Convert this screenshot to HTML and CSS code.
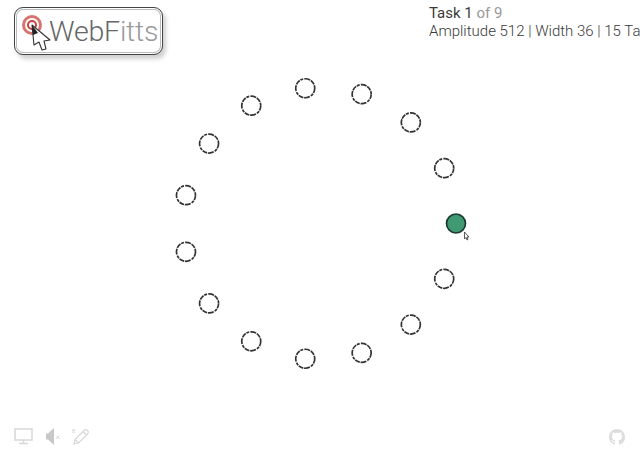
FILE: index.html
```html
<!DOCTYPE html>
<html lang="en">
<head>
  <meta charset="UTF-8">
  <title>WebFitts</title>
  <link rel="stylesheet" href="styles.css">
</head>
<body>
  <div class="page">
    <header class="top">
      <div class="logo">
        <svg class="logo-mark" width="36" height="40" viewBox="0 0 36 40">
          <circle cx="11" cy="11" r="8.500" fill="#fff" stroke="#d9736f" stroke-width="3"/>
          <circle cx="11" cy="11" r="4" fill="#fff" stroke="#c9403c" stroke-width="2"/>
          <path d="M11 11 L13 31 L18 28 L21 36 L25 35 L23 27 L29 26 Z" fill="#fff" stroke="#333" stroke-width="1.100" stroke-linejoin="round"/>
          <path d="M11 11 L12 21 L17 19 Z" fill="#222"/>
        </svg>
        <span class="logo-text">WebF<span class="faded">itts</span></span>
      </div>
      <div class="status">
        <div class="task">Task 1 <span class="faded">of 9</span></div>
        <div class="detail">Amplitude 512 | Width 36 | 15 Ta</div>
      </div>
    </header>

    <svg class="stage" id="stage" width="640" height="450" viewBox="0 0 640 450"></svg>

    <footer class="bottom">
      <div class="tools">
        <svg width="19" height="17" viewBox="0 0 19 17" fill="none" stroke="#d8d8d8" stroke-width="1.500">
          <rect x="1" y="1" width="17" height="11"/>
          <path d="M9.500 12 V15 M5 15.500 H14"/>
        </svg>
        <svg width="15" height="17" viewBox="0 0 15 17">
          <path d="M1 5.500 H3 L9 0 V17 L3 11.500 H1 Z" fill="#c8c8c8"/>
          <path d="M11 7.500 L14.500 11 M14.500 7.500 L11 11" stroke="#d8d8d8" stroke-width="1"/>
        </svg>
        <svg width="19" height="17" viewBox="0 0 19 17" fill="none" stroke="#d8d8d8" stroke-width="1.200">
          <path d="M1 1.500 L4 4.500 M4 1.500 L1 4.500"/>
          <path d="M3 16 L4 11.500 L13.500 2 Q15 1 16.500 2.500 Q18 4 17 5.500 L7.500 15 Z M12 3.500 L15.500 7 M4 11.500 L7.500 15"/>
        </svg>
      </div>
      <svg width="16" height="16" viewBox="0 0 16 16">
        <path fill="#dcdcdc" d="M8 0C3.580 0 0 3.580 0 8c0 3.540 2.290 6.530 5.470 7.590.4.070.55-.17.55-.38 0-.19-.01-.82-.01-1.490-2.010.37-2.530-.49-2.690-.94-.09-.23-.48-.94-.82-1.130-.28-.15-.68-.52-.01-.53.630-.01 1.080.58 1.230.82.720 1.210 1.870.87 2.330.66.070-.52.280-.87.510-1.070-1.780-.2-3.640-.89-3.640-3.950 0-.87.310-1.590.82-2.150-.08-.2-.36-1.020.08-2.120 0 0 .67-.21 2.200.82.640-.18 1.320-.27 2-.27s1.360.09 2 .27c1.530-1.040 2.200-.82 2.200-.82.440 1.100.16 1.920.08 2.120.51.560.82 1.270.82 2.150 0 3.070-1.870 3.750-3.650 3.950.29.250.54.730.54 1.480 0 1.070-.01 1.930-.01 2.200 0 .21.150.46.550.38A8.010 8.010 0 0 0 16 8c0-4.420-3.580-8-8-8z"/>
      </svg>
    </footer>
  </div>

  <script>
    const stage = document.getElementById('stage');
    const ns = 'http://www.w3.org/2000/svg';
    const count = 15;

    for (let i = 0; i < count; i++) {
      const angle = i * 2 * Math.PI / count;
      const c = document.createElementNS(ns, 'circle');
      c.setAttribute('cx', 319.5 + 136.5 * Math.cos(angle));
      c.setAttribute('cy', 223.5 + 136 * Math.sin(angle));
      c.setAttribute('r', 9.500);
      c.setAttribute('class', i === 0 ? 'target active' : 'target');
      stage.appendChild(c);
    }

    // Pointer next to the active target
    const cursor = document.createElementNS(ns, 'path');
    cursor.setAttribute('d', 'M464.500 232 V239 L466 237.500 L467 240 L468 239.500 L467 237 L469 237 Z');
    cursor.setAttribute('class', 'cursor');
    stage.appendChild(cursor);
  </script>
</body>
</html>
```

FILE: styles.css
```css
body {
  margin: 0;
  background-color: #fff;
  font-family: Roboto, "Liberation Sans", sans-serif;
  color: #3a3a3a;
}
.page {
  position: relative;
  width: 640px;
  height: 450px;
  overflow: hidden;
  display: flex;
  flex-direction: column;
  justify-content: space-between;
}
.top {
  display: flex;
  justify-content: space-between;
  align-items: flex-start;
  padding: 4px 0 0 14px;
}
.logo {
  display: flex;
  align-items: center;
  box-sizing: border-box;
  width: 149px;
  height: 48px;
  margin-top: 3px;
  padding-left: 6px;
  border: 1px solid #444;
  border-radius: 9px;
  background-color: #fff;
  box-shadow: inset 0 0 0 1px #fff, inset 0 0 0 2px #bbb, 3px 4px 4px #d0d0d0;
}
.logo-mark {
  flex: none;
  margin: 6px -8px 0 0;
}
.logo-text {
  position: relative;
  font-size: 28.500px;
  font-weight: 300;
  letter-spacing: -0.2px;
  color: #666;
}
.faded {
  color: #999;
}
.status {
  width: 211px;
  flex: none;
  white-space: nowrap;
  font-size: 15px;
  font-weight: 300;
  line-height: 18px;
}
.task {
  font-weight: 400;
}
.stage {
  position: absolute;
  top: 0;
  left: 0;
}
.target {
  fill: #fff;
  stroke: #333;
  stroke-width: 1.700;
  stroke-dasharray: 5 0.800 3 1.200 6 0.800;
}
.target.active {
  fill: #3f9a73;
  stroke: #1f3a30;
  stroke-dasharray: none;
}
.cursor {
  fill: #fff;
  stroke: #333;
  stroke-width: 0.800;
}
.bottom {
  display: flex;
  justify-content: space-between;
  align-items: center;
  padding: 0 15px 5px 14px;
}
.tools {
  display: flex;
  gap: 11.500px;
}
```
